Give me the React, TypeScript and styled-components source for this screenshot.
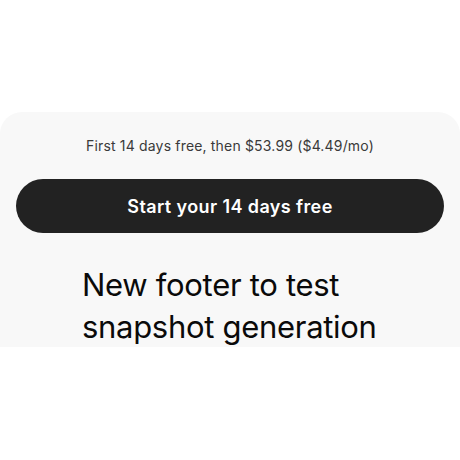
import React from "react";
import styled, { createGlobalStyle } from "styled-components";

const GlobalStyle = createGlobalStyle`
  html, body { margin: 0; padding: 0; background: #ffffff; }
  body { font-family: Inter, "Noto Sans", sans-serif; -webkit-font-smoothing: antialiased; }
`;

const Page = styled.div`
  width: 460px;
  height: 460px;
  padding-top: 112px;
  box-sizing: border-box;
  background: #ffffff;
`;

const Panel = styled.section`
  height: 235px;
  overflow: hidden;
  background: #f8f8f8;
  border-radius: 22px 22px 0 0;
  padding: 25px 16px 0;
  box-sizing: border-box;
  display: flex;
  flex-direction: column;
  align-items: stretch;
`;

const Offer = styled.p`
  margin: 0;
  text-align: center;
  font-size: 14px;
  line-height: 18px;
  color: #3a3a3a;
  letter-spacing: 0.17px;
`;

const StartButton = styled.button`
  margin-top: 24px;
  height: 54px;
  flex-shrink: 0;
  border: none;
  border-radius: 27px;
  background: #222222;
  color: #ffffff;
  font-family: Inter, "Noto Sans", sans-serif;
  font-size: 18px;
  font-weight: 600;
  letter-spacing: 0.4px;
  cursor: pointer;
`;

const Heading = styled.h2`
  margin: 31px 0 0 66px;
  font-size: 31px;
  font-weight: 400;
  line-height: 42px;
  letter-spacing: -0.3px;
  color: #0a0a0a;
  flex-shrink: 0;
`;

export default function App() {
  return (
    <>
      <GlobalStyle />
      <Page>
        <Panel>
          <Offer>First 14 days free, then $53.99 ($4.49/mo)</Offer>
          <StartButton>Start your 14 days free</StartButton>
          <Heading>
            New footer to test
            <br />
            snapshot generation
          </Heading>
        </Panel>
      </Page>
    </>
  );
}
